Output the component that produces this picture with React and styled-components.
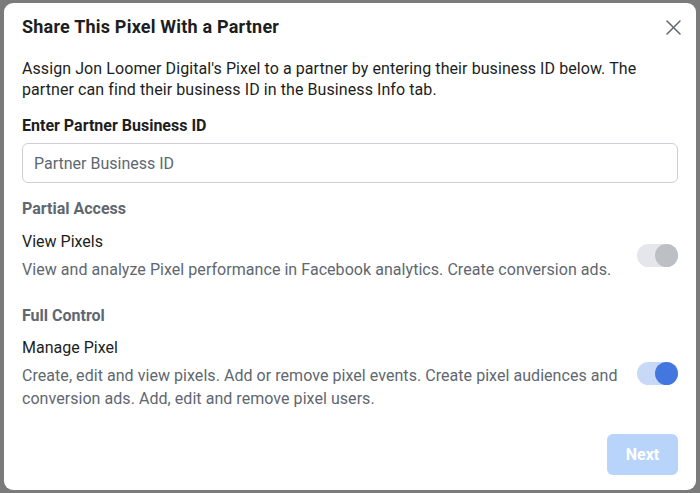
import React from "react";
import styled, { createGlobalStyle } from "styled-components";

const Global = createGlobalStyle`
  html, body { margin: 0; padding: 0; }
  body {
    background: #7b7b7b;
    font-family: Roboto, "Helvetica Neue", Arial, sans-serif;
    -webkit-font-smoothing: antialiased;
  }
`;

const Backdrop = styled.div`
  width: 700px;
  height: 493px;
  box-sizing: border-box;
  padding: 3px 4px;
  background: #7b7b7b;
`;

const Modal = styled.div`
  width: 692px;
  height: 487px;
  box-sizing: border-box;
  background: #fff;
  border-radius: 9px;
  padding: 12px 18px 15px 18px;
  display: flex;
  flex-direction: column;
  color: #1c1e21;
`;

const Header = styled.div`
  display: flex;
  align-items: center;
  justify-content: space-between;
  height: 24px;
`;

const Title = styled.h1`
  margin: 0;
  font-size: 18px;
  font-weight: 700;
  line-height: 24px;
  letter-spacing: 0.2px;
  color: #1c1e21;
`;

const Close = styled.button`
  border: 0;
  background: none;
  padding: 0;
  width: 15px;
  height: 15px;
  display: flex;
  align-items: center;
  justify-content: center;
  margin-right: -3px;
  cursor: pointer;
`;

const Intro = styled.p`
  margin: 19px 0 0;
  font-size: 16px;
  line-height: 21px;
  letter-spacing: 0.08px;
  color: #1c1e21;
`;

const Label = styled.div`
  margin-top: ${(p) => p.$mt}px;
  font-size: 16px;
  font-weight: 700;
  line-height: 20px;
  color: ${(p) => (p.$muted ? "#606770" : "#1c1e21")};
`;

const Input = styled.input`
  margin-top: 7px;
  height: 40px;
  box-sizing: border-box;
  border: 1px solid #ccd0d5;
  border-radius: 6px;
  padding: 0 11px;
  font-family: inherit;
  font-size: 16px;
  color: #1c1e21;
  outline: none;
  &::placeholder { color: #606770; }
`;

const Option = styled.div`
  margin-top: ${(p) => p.$mt}px;
  display: grid;
  grid-template-columns: 1fr auto;
  column-gap: 16px;
  align-items: center;
`;

const OptionText = styled.div`
  display: flex;
  flex-direction: column;
`;

const OptionName = styled.div`
  font-size: 16px;
  line-height: 20px;
  color: #1c1e21;
`;

const OptionDesc = styled.div`
  margin-top: 6px;
  font-size: 16px;
  line-height: 23px;
  letter-spacing: 0.05px;
  color: #606770;
`;

const Toggle = styled.div`
  width: 41px;
  height: 23px;
  border-radius: 12px;
  background: ${(p) => (p.$on ? "#c8d8f7" : "#e4e6eb")};
  position: relative;
  margin-top: ${(p) => p.$mt || 0}px;
  &::after {
    content: "";
    position: absolute;
    top: 0;
    right: 0;
    width: 23px;
    height: 23px;
    border-radius: 50%;
    background: ${(p) => (p.$on ? "#4476e0" : "#bcc0c4")};
  }
`;

const Footer = styled.div`
  margin-top: auto;
  display: flex;
  justify-content: flex-end;
`;

const NextButton = styled.button`
  width: 71px;
  height: 41px;
  border: 0;
  border-radius: 6px;
  background: #b8d4fa;
  color: #fff;
  font-family: inherit;
  font-size: 16px;
  font-weight: 700;
`;

export default function App() {
  return (
    <>
      <Global />
      <Backdrop>
        <Modal>
          <Header>
            <Title>Share This Pixel With a Partner</Title>
            <Close aria-label="Close">
              <svg width="15" height="15" viewBox="0 0 15 15">
                <path d="M1 1 L14 14 M14 1 L1 14" stroke="#606770" strokeWidth="1.5" strokeLinecap="round" />
              </svg>
            </Close>
          </Header>
          <Intro>
            Assign Jon Loomer Digital's Pixel to a partner by entering their business ID below. The partner can find their business ID in the Business Info tab.
          </Intro>
          <Label $mt={16}>Enter Partner Business ID</Label>
          <Input placeholder="Partner Business ID" />
          <Label $mt={16} $muted>Partial Access</Label>
          <Option $mt={13}>
            <OptionText>
              <OptionName>View Pixels</OptionName>
              <OptionDesc>View and analyze Pixel performance in Facebook analytics. Create conversion ads.</OptionDesc>
            </OptionText>
            <Toggle $mt={-2} />
          </Option>
          <Label $mt={25} $muted>Full Control</Label>
          <Option $mt={12}>
            <OptionText>
              <OptionName>Manage Pixel</OptionName>
              <OptionDesc>Create, edit and view pixels. Add or remove pixel events. Create pixel audiences and conversion ads. Add, edit and remove pixel users.</OptionDesc>
            </OptionText>
            <Toggle $on $mt={-2} />
          </Option>
          <Footer>
            <NextButton>Next</NextButton>
          </Footer>
        </Modal>
      </Backdrop>
    </>
  );
}
